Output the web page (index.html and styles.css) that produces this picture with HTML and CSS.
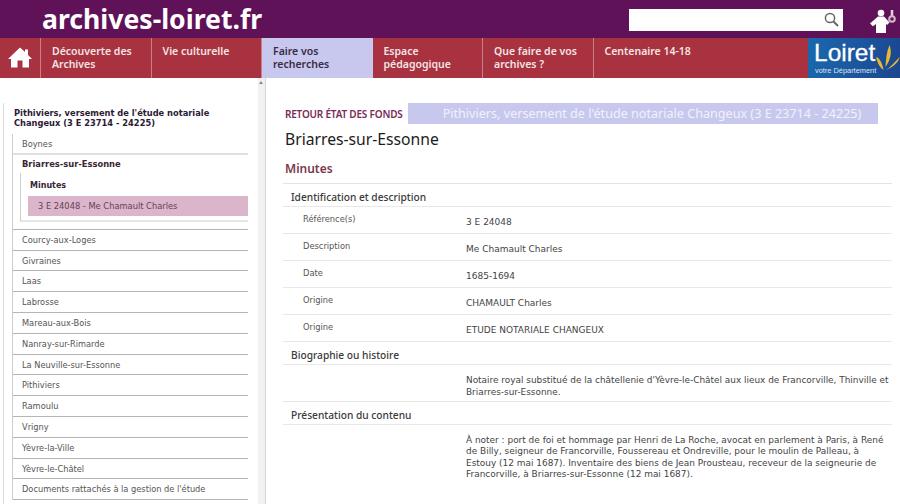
FILE: index.html
```html
<!DOCTYPE html>
<html lang="fr">
<head>
<meta charset="utf-8">
<title>Briarres-sur-Essonne</title>
<link rel="stylesheet" href="styles.css">
</head>
<body>
<header class="top">
  <div class="site">archives-loiret.fr</div>
  <div class="search">
    <svg class="lens" width="15" height="15" viewBox="0 0 15 15"><circle cx="6" cy="6" r="4.6" fill="none" stroke="#666" stroke-width="1.5"/><path d="M9.500 9.500L14 14" stroke="#666" stroke-width="2"/></svg>
  </div>
  <svg class="mascot" width="28" height="24" viewBox="0 0 28 24"><circle cx="11" cy="4" r="3.300" fill="#fff"/><path d="M8 7.500H14L19.500 13.500 17 16 16 15V24H6V15L3 17.200 0 14.500Z" fill="#fff"/><path d="M22 1v6" stroke="#e4cfe0" stroke-width="2.500"/><circle cx="22" cy="10" r="2.800" fill="none" stroke="#d4b8cf" stroke-width="2"/></svg>
</header>
<nav class="nav">
  <a class="home"><svg width="24" height="21" viewBox="0 0 24 21"><path d="M12 0.500L17 5V2.500H20V8L24 12H21V20.500H14.500V13.500H9.500V20.500H3V12H0Z" fill="#fff"/></svg></a>
  <a class="item">Découverte des Archives</a>
  <a class="item">Vie culturelle</a>
  <a class="item active">Faire vos recherches</a>
  <a class="item">Espace pédagogique</a>
  <a class="item">Que faire de vos archives ?</a>
  <a class="item last">Centenaire 14-18</a>
  <div class="logo">
    <span class="logo-name">Loiret</span>
    <span class="logo-sub">votre Département</span>
    <svg class="wheat" width="24" height="28" viewBox="0 0 24 28"><path d="M13.500 1C16 8 15 15 9.500 23 10 15 10.500 8 13.500 1ZM0 13C3.500 14 6 18 7.500 26 4 24 1.500 19 0 13ZM23.500 13C23 18 17 23 10 26 13.500 24 18 19 23.500 13Z" fill="#e8b92f"/></svg>
  </div>
</nav>
<main class="page">
  <aside class="side">
    <div class="tree">
      <div class="tree-box">
        <div class="tree-title">Pithiviers, versement de l'étude notariale Changeux (3 E 23714 - 24225)</div>
        <ul class="list">
          <li>Boynes</li>
          <li class="open">
            <b>Briarres-sur-Essonne</b>
            <div class="sub">
              <b>Minutes</b>
              <div class="current">3 E 24048 - Me Chamault Charles</div>
            </div>
          </li>
          <li>Courcy-aux-Loges</li>
          <li>Givraines</li>
          <li>Laas</li>
          <li>Labrosse</li>
          <li>Mareau-aux-Bois</li>
          <li>Nanray-sur-Rimarde</li>
          <li>La Neuville-sur-Essonne</li>
          <li>Pithiviers</li>
          <li>Ramoulu</li>
          <li>Vrigny</li>
          <li>Yèvre-la-Ville</li>
          <li>Yèvre-le-Châtel</li>
          <li>Documents rattachés à la gestion de l'étude</li>
        </ul>
      </div>
    </div>
    <div class="scroll"><span class="arrow"></span></div>
  </aside>
  <section class="content">
    <div class="back">
      <a class="back-link">RETOUR ÉTAT DES FONDS</a>
      <div class="back-title">Pithiviers, versement de l'étude notariale Changeux (3 E 23714 - 24225)</div>
    </div>
    <h1>Briarres-sur-Essonne</h1>
    <h2>Minutes</h2>
    <h3>Identification et description</h3>
    <div class="row"><span class="key">Référence(s)</span><span class="val">3 E 24048</span></div>
    <div class="row"><span class="key">Description</span><span class="val">Me Chamault Charles</span></div>
    <div class="row"><span class="key">Date</span><span class="val">1685-1694</span></div>
    <div class="row"><span class="key">Origine</span><span class="val">CHAMAULT Charles</span></div>
    <div class="row"><span class="key">Origine</span><span class="val">ETUDE NOTARIALE CHANGEUX</span></div>
    <h3>Biographie ou histoire</h3>
    <div class="row text"><span class="key"></span><span class="val">Notaire royal substitué de la châtellenie d'Yèvre-le-Châtel aux lieux de Francorville, Thinville et Briarres-sur-Essonne.</span></div>
    <h3>Présentation du contenu</h3>
    <div class="row text plain"><span class="key"></span><span class="val">À noter : port de foi et hommage par Henri de La Roche, avocat en parlement à Paris, à René<br>de Billy, seigneur de Francorville, Foussereau et Ondreville, pour le moulin de Palleau, à<br>Estouy (12 mai 1687). Inventaire des biens de Jean Prousteau, receveur de la seigneurie de<br>Francorville, à Briarres-sur-Essonne (12 mai 1687).</span></div>
  </section>
</main>
</body>
</html>
```
FILE: styles.css
```css
* { box-sizing: border-box; }
html, body { margin: 0; height: 504px; overflow: hidden; }
body { width: 900px; background: #fff; font-family: "DejaVu Sans", sans-serif; font-size: 9px; color: #444; }
.top { height: 38px; background: #5f1257; display: flex; align-items: flex-start; }
.site { margin-left: 42px; font-family: "Noto Sans", sans-serif; font-weight: 700; font-size: 26.600px; line-height: 38px; color: #fff; flex: 1; }
.search { width: 214px; height: 22px; margin-top: 9px; background: #fff; position: relative; }
.lens { position: absolute; right: 4px; top: 3px; }
.mascot { margin: 9px 2px 0 27px; flex: none; }
.nav { height: 40px; background: #a83240; display: flex; font-family: "Noto Sans", sans-serif; font-size: 10.500px; line-height: 12.500px; font-weight: 600; color: #f4e4e4; }
.home { width: 41px; padding-bottom: 1px; display: flex; align-items: center; justify-content: center; border-right: 1px solid #c97f86; }
.item { width: 110.500px; padding: 7px 10px 0 11px; border-right: 1px solid #c97f86; }
.item.active { background: #c8c8ee; color: #3a2b45; border-right: 0; }
.item.last { flex: 1; border-right: 0; }
.logo { width: 92px; background: linear-gradient(100deg, #1b68ad, #1b4690); position: relative; color: #fff; font-weight: 400; }
.logo-name { position: absolute; left: 6px; top: 4px; font-family: "Liberation Sans", sans-serif; font-size: 24.500px; line-height: 21px; -webkit-text-stroke: 0.3px #fff; }
.logo-sub { position: absolute; left: 7px; top: 27.500px; font-family: "Liberation Sans", sans-serif; font-size: 7.400px; line-height: 9px; color: #dbe6f2; white-space: nowrap; }
.wheat { position: absolute; right: 0; top: 6px; }
.page { display: flex; height: 426px; }
.side { width: 266px; display: flex; border-right: 1px solid #d8d8d8; flex: none; }
.tree { width: 258px; padding: 25px 10px 0 3px; }
.tree-box { height: 100%; border-left: 1px solid #ddd; }
.tree-title { padding: 5px 0 0 10px; font-weight: 700; font-size: 8.300px; line-height: 10px; color: #2d1a35; height: 31px; }
.list { list-style: none; margin: 0 0 0 8px; padding: 0; border-left: 1px solid #ccc; }
.list li { height: 20.800px; padding: 0 0 0 9px; line-height: 20px; border-bottom: 1px solid #b5b5b5; color: #555; font-size: 8.250px; white-space: nowrap; }
.list li:first-child { border-bottom: 2px solid #e0e0e0; }
.list li.open { padding: 0; height: 75px; }
.list li.open > b { display: block; padding-left: 9px; line-height: 18px; color: #3a2435; font-size: 8.350px; }
.sub { margin-left: 7px; border-left: 1px solid #ccc; border-bottom: 2px solid #e5e5e5; height: 49px; }
.sub b { display: block; padding: 3px 0 0 9px; line-height: 20px; color: #3a2435; font-size: 8px; }
.current { margin-left: 7px; height: 20px; line-height: 20px; padding-left: 10px; background: #dbb5c9; color: #65425a; font-size: 8.300px; }
.scroll { width: 7px; background: #f1f1f1; position: relative; flex: none; }
.arrow { position: absolute; left: 1px; top: 3px; border: 2.500px solid transparent; border-bottom: 3px solid #888; border-top: 0; }
.content { flex: 1; min-width: 0; padding: 25px 8px 0 17px; }
.back { display: flex; align-items: center; height: 21px; }
.back-link { width: 125px; padding-left: 2px; font-family: "Noto Sans", sans-serif; font-size: 10px; letter-spacing: -0.200px; font-weight: 600; color: #7b2a55; white-space: nowrap; flex: none; }
.back-title { width: 470px; height: 21px; padding-left: 18px; background: #c8c8ee; color: #f1f1fb; font-family: "Noto Sans", sans-serif; font-size: 12.600px; line-height: 21px; text-align: center; white-space: nowrap; }
h1 { margin: 3px 0 0 2px; font-family: "Noto Sans", sans-serif; font-size: 15.700px; line-height: 24px; font-weight: 400; color: #1c1c1c; }
h2 { margin: 8px 0 0; padding: 0 0 4px 2px; font-family: "Noto Sans", sans-serif; font-size: 12px; line-height: 20px; font-weight: 600; color: #7a3a4c; border-bottom: 1px solid #e4e4e4; }
h3 { margin: 0; padding-left: 8px; height: 23px; font-family: "Noto Sans", sans-serif; font-size: 10.200px; line-height: 27px; font-weight: 500; color: #3a3a3a; border-bottom: 1px solid #e8e8e8; }
.row { display: flex; height: 27px; border-bottom: 1px solid #e8e8e8; font-size: 9px; }
.key { width: 183px; padding: 7px 0 0 20px; line-height: 11px; color: #555; flex: none; font-size: 8.300px; }
.val { padding-top: 10px; line-height: 11px; color: #444; }
.row.text { height: 37px; font-size: 8.920px; }
.row.text.plain { height: 80px; border: 0; font-size: 8.950px; }
.text .val { padding-top: 9px; line-height: 12px; }
.plain .val { padding-top: 9.500px; line-height: 11.600px; white-space: nowrap; }
```
